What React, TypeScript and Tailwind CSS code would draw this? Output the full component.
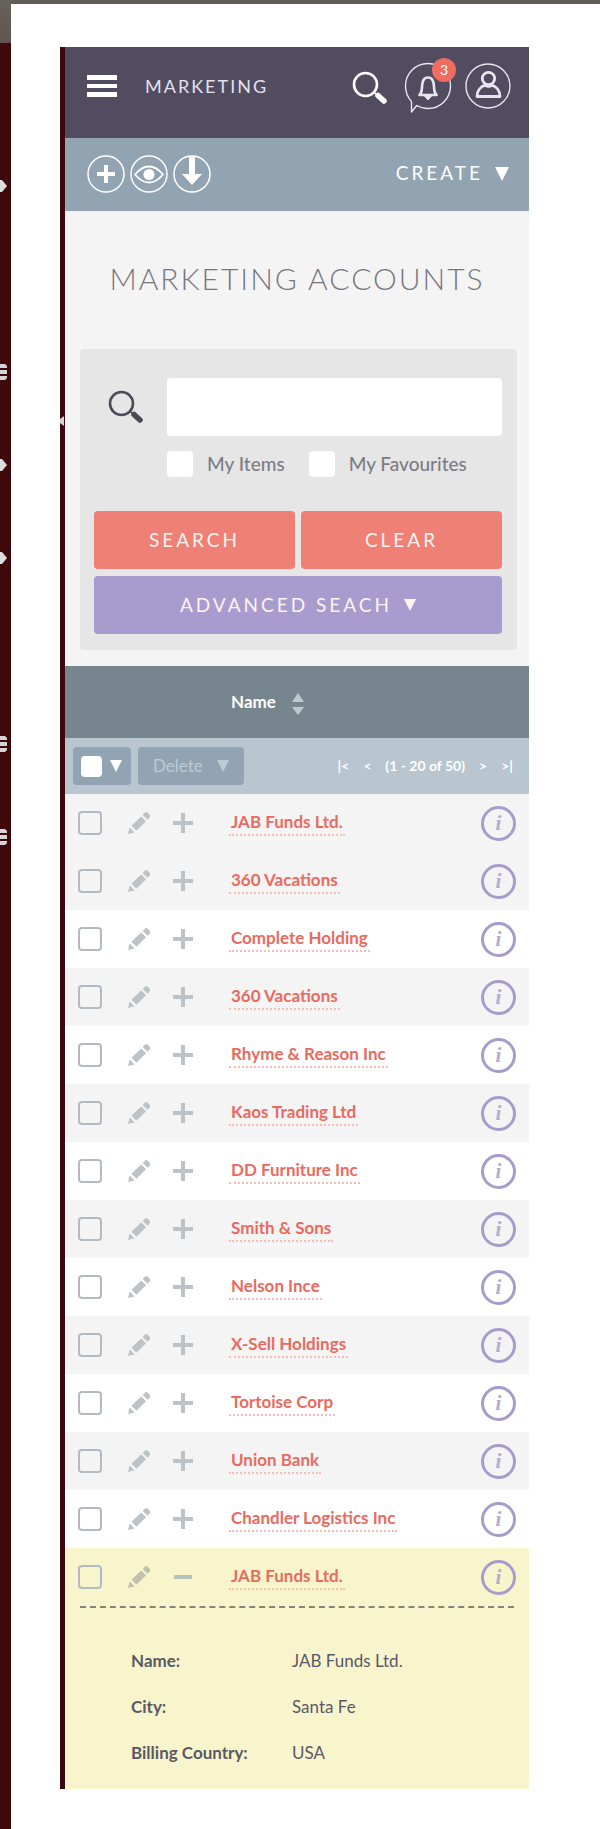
import React, { useState } from 'react';

interface Account {
    id: number;
    name: string;
    city?: string;
    country?: string;
}

const accounts: Account[] = [
    { id: 1, name: 'JAB Funds Ltd.' },
    { id: 2, name: '360 Vacations' },
    { id: 3, name: 'Complete Holding' },
    { id: 4, name: '360 Vacations' },
    { id: 5, name: 'Rhyme & Reason Inc' },
    { id: 6, name: 'Kaos Trading Ltd' },
    { id: 7, name: 'DD Furniture Inc' },
    { id: 8, name: 'Smith & Sons' },
    { id: 9, name: 'Nelson Ince' },
    { id: 10, name: 'X-Sell Holdings' },
    { id: 11, name: 'Tortoise Corp' },
    { id: 12, name: 'Union Bank' },
    { id: 13, name: 'Chandler Logistics Inc' },
    { id: 14, name: 'JAB Funds Ltd.', city: 'Santa Fe', country: 'USA' },
];

const railItems = ['arrow', 'none', 'list', 'arrow', 'arrow', 'none', 'list', 'list'];

const Caret = ({ className }: { className: string }) => (
    <svg viewBox="0 0 14 14" className={className} fill="currentColor" aria-hidden="true">
        <path d="M0 0h14L7 14z" />
    </svg>
);

const SearchIcon = ({ className }: { className: string }) => (
    <svg viewBox="0 0 36 34" className={className} fill="none" stroke="currentColor" aria-hidden="true">
        <circle cx="13.5" cy="13.5" r="11.5" strokeWidth="2.600" />
        <path d="M26 24.500l6 5.500" strokeWidth="5.500" strokeLinecap="round" />
        <path d="M21.500 21l3 2.500" strokeWidth="1.600" />
    </svg>
);

const PencilIcon = () => (
    <svg viewBox="0 0 24 24" className="size-6" fill="currentColor" aria-hidden="true">
        <path d="M1 23l1.600-6.600 5 5z" />
        <path d="M4.500 14.800L14.200 5.400l4.800 4.800-9.600 9.500z" />
        <path d="M15.700 3.900l2.100-2.100a2 2 0 0 1 2.800 0l2 2a2 2 0 0 1 0 2.800l-2.100 2.100z" />
    </svg>
);

// Slice of the desktop side menu that peeks out on the left
const SideRail = () => (
    <div className="w-[11px] shrink-0 overflow-hidden bg-[#3f080b]">
        <div className="mb-24 h-[43px] bg-linear-to-b from-[#65625c] to-[#625350]" />
        {railItems.map((item, index) => (
            <div key={index} className="flex h-[93px] items-center">
                {item === 'arrow' && (
                    <svg viewBox="0 0 8 12" className="h-3 w-2" fill="#dedede">
                        <path d="M0 0h2l5 6-5 6H0z" />
                    </svg>
                )}
                {item === 'list' && (
                    <svg viewBox="0 0 8 16" className="h-4 w-2" fill="#d5d5d5">
                        <path d="M0 0h5l2 2v2H0zM0 6h7v4H0zM0 12h7v2l-2 2H0z" />
                    </svg>
                )}
            </div>
        ))}
    </div>
);

const Header = () => (
    <header className="flex h-[91px] items-center bg-[#524c61] pr-[18px] pb-[13px] pl-[22px] text-white">
        <button aria-label="Menu">
            <svg viewBox="0 0 30 24" className="h-6 w-[30px]" fill="currentColor">
                <path d="M0 1h30v5H0zM0 10h30v4H0zM0 18h30v5H0z" />
            </svg>
        </button>
        <span className="ml-7 text-lg tracking-[2px] text-[#e4e0ec]">MARKETING</span>
        <div className="ml-auto flex items-center">
            <button aria-label="Search" className="pt-1">
                <SearchIcon className="h-[34px] w-9" />
            </button>
            <button aria-label="Notifications" className="relative ml-4">
                <svg viewBox="0 0 48 54" className="h-[54px] w-12" fill="none" stroke="#e9e6ef">
                    <path d="M7.500 42.500C3.800 38.500 1.500 33 1.500 27 1.500 14.500 11.600 4.500 24 4.500S46.500 14.500 46.500 27 36.400 49.500 24 49.500c-4.200 0-8-1-11.300-3L7.500 53z" strokeWidth="1.400" strokeLinejoin="round" />
                    <path d="M15.500 36c3-3 2.200-6.500 2.700-10.500.5-4.500 2.800-7 5.800-7s5.300 2.500 5.800 7c.5 4-.3 7.500 2.700 10.500z" strokeWidth="2.600" strokeLinejoin="round" />
                    <path d="M20.500 37h7L24 41z" fill="#e9e6ef" />
                </svg>
                <span className="absolute -top-px right-[-4px] flex size-6 items-center justify-center rounded-full bg-[#ef6c61] text-sm leading-none">3</span>
            </button>
            <button aria-label="Profile" className="ml-[13px]">
                <svg viewBox="0 0 46 46" className="size-[46px]" fill="none" stroke="#e9e6ef">
                    <circle cx="23" cy="23" r="22" strokeWidth="1.400" />
                    <circle cx="23.500" cy="15.500" r="6.200" strokeWidth="2.800" />
                    <path d="M12 33.500c0-6 4-10 8-11.300 2 1.200 5 1.200 7 0 4 1.300 8 5.300 8 11.300z" strokeWidth="2.800" strokeLinejoin="round" />
                </svg>
            </button>
        </div>
    </header>
);

const Toolbar = () => (
    <div className="flex h-[73px] items-center bg-[#92a4b1] pr-5 pb-[2px] pl-[22px] text-white">
        <div className="flex gap-[5px]">
            <button aria-label="Add">
                <svg viewBox="0 0 38 38" className="size-[38px]" fill="none" stroke="currentColor">
                    <circle cx="19" cy="19" r="18" strokeWidth="1.500" />
                    <path d="M19 10v18M10 19h18" strokeWidth="4" />
                </svg>
            </button>
            <button aria-label="View">
                <svg viewBox="0 0 38 38" className="size-[38px]" fill="none" stroke="currentColor">
                    <circle cx="19" cy="19" r="18" strokeWidth="1.500" />
                    <path d="M5 19.500c5-6 9-8 14-8s9 2 14 8c-5 6-9 8-14 8s-9-2-14-8z" strokeWidth="1.800" />
                    <circle cx="19" cy="19.500" r="5.500" fill="currentColor" stroke="none" />
                </svg>
            </button>
            <button aria-label="Download">
                <svg viewBox="0 0 38 38" className="size-[38px]" fill="none" stroke="currentColor">
                    <circle cx="19" cy="19" r="18" strokeWidth="1.500" />
                    <path d="M16 2h6v17h7L19 30 9 19h7z" fill="currentColor" stroke="none" />
                </svg>
            </button>
        </div>
        <button className="ml-auto flex items-center gap-3 text-[19px] tracking-[3px]">
            CREATE
            <Caret className="size-[14px]" />
        </button>
    </div>
);

const SearchPanel = () => (
    <form className="mr-3 ml-[15px] rounded-sm bg-[#e6e6e6] pt-[29px] pr-[15px] pb-4 pl-[14px]" onSubmit={(e) => e.preventDefault()}>
        <div className="flex">
            <label htmlFor="query" className="w-[73px] shrink-0 pt-3 pl-[14px] text-[#4c4a56]">
                <SearchIcon className="h-[34px] w-9" />
            </label>
            <div className="min-w-0 flex-1">
                <input id="query" type="text" aria-label="Search accounts" className="h-[58px] w-full rounded bg-white px-4 text-lg outline-none" />
                <div className="mt-[15px] flex gap-6 text-[19px] leading-[26px] font-medium text-[#7c7d85]">
                    <label className="flex items-center gap-[14px]">
                        <input type="checkbox" className="size-[26px] appearance-none rounded-sm bg-white" />
                        My Items
                    </label>
                    <label className="flex items-center gap-[14px]">
                        <input type="checkbox" className="size-[26px] appearance-none rounded-sm bg-white" />
                        My Favourites
                    </label>
                </div>
            </div>
        </div>
        <div className="mt-[34px] grid grid-cols-2 gap-x-[6px] gap-y-[7px] text-[19px] tracking-[3px] text-[#fdf3f1]">
            <button type="submit" className="h-[58px] rounded bg-[#ee8075]">SEARCH</button>
            <button type="reset" className="h-[58px] rounded bg-[#ee8075]">CLEAR</button>
            <button type="button" className="col-span-2 flex h-[58px] items-center justify-center gap-3 rounded bg-[#a89bce]">
                ADVANCED SEACH
                <Caret className="size-3" />
            </button>
        </div>
    </form>
);

const AccountDetails = ({ account }: { account: Account }) => (
    <tr className="bg-[#f8f5cd]">
        <td colSpan={5} className="px-[15px] pb-3">
            <dl className="grid grid-cols-[161px_1fr] gap-y-[22px] border-t-2 border-dashed border-[#85847a] pt-[41px] pb-3 pl-[51px] text-[17px] leading-6 text-[#5b5866]">
                <dt className="font-bold">Name:</dt>
                <dd>{account.name}</dd>
                <dt className="font-bold">City:</dt>
                <dd>{account.city}</dd>
                <dt className="font-bold">Billing Country:</dt>
                <dd>{account.country}</dd>
            </dl>
        </td>
    </tr>
);

interface AccountRowProps {
    account: Account;
    index: number;
    open: boolean;
    onToggle: () => void;
}

const AccountRow: React.FC<AccountRowProps> = ({ account, index, open, onToggle }) => {
    const striped = index === 0 || index % 2 === 1;

    return (
        <>
            <tr className={`h-[58px] ${open ? 'bg-[#f8f5cd] text-[#c2c1b0]' : striped ? 'bg-[#f4f4f4] text-[#bcc2c5]' : 'bg-white text-[#bcc2c5]'}`}>
                <td className="pl-[13px]">
                    <input
                        type="checkbox"
                        aria-label={`Select ${account.name}`}
                        className="block size-6 appearance-none rounded border-2 border-[#b3bac4] checked:bg-[#b3bac4]"
                    />
                </td>
                <td>
                    <button aria-label={`Edit ${account.name}`} className="block">
                        <PencilIcon />
                    </button>
                </td>
                <td>
                    <button aria-label="Toggle details" aria-expanded={open} onClick={onToggle} className="block">
                        <svg viewBox="0 0 20 20" className="size-5" stroke={open ? '#b5c3b8' : 'currentColor'} strokeWidth="4">
                            <path d={open ? 'M1 10h18' : 'M0 10h20M10 0v20'} />
                        </svg>
                    </button>
                </td>
                <td>
                    <a href="#" className="inline-block border-b-2 border-dotted border-[#f6bdb7] px-[2px] text-[17px] leading-6 font-bold text-[#ea6a60]">
                        {account.name}
                    </a>
                </td>
                <td>
                    <button
                        aria-label={`About ${account.name}`}
                        className="flex size-[35px] items-center justify-center rounded-full border-[3px] border-[#a79dcd] font-['Liberation_Serif',serif] text-[21px] leading-none font-bold text-[#b3acd2] italic"
                    >
                        i
                    </button>
                </td>
            </tr>
            {open && <AccountDetails account={account} />}
        </>
    );
};

const AccountTable = () => {
    const [openId, setOpenId] = useState<number | null>(14);

    return (
        <table className="mt-4 w-full table-fixed border-collapse text-left">
            <colgroup>
                <col className="w-[62px]" />
                <col className="w-[46px]" />
                <col className="w-[56px]" />
                <col />
                <col className="w-12" />
            </colgroup>
            <thead>
                <tr className="h-[72px] bg-[#77858e] text-[17px] text-white">
                    <td colSpan={3} />
                    <th colSpan={2} className="pl-[2px] font-bold">
                        <button className="flex items-center gap-4 font-bold">
                            Name
                            <svg viewBox="0 0 12 22" className="mt-1 h-[22px] w-3" fill="#c0c8ce" aria-hidden="true">
                                <path d="M6 0l6 9H0zM6 22l6-8H0z" />
                            </svg>
                        </button>
                    </th>
                </tr>
                <tr className="h-14 bg-[#b9c6cf] text-white">
                    <td colSpan={5} className="pr-4 pl-2">
                        <div className="flex items-center gap-[7px]">
                            <div className="flex h-[38px] items-center gap-2 rounded bg-[#92a4b3] px-2">
                                <input type="checkbox" aria-label="Select all" className="size-[21px] appearance-none rounded-sm bg-white" />
                                <button aria-label="Selection options" className="pr-px">
                                    <Caret className="size-3" />
                                </button>
                            </div>
                            <button className="flex h-[38px] items-center gap-[14px] rounded bg-[#92a4b3] px-[15px] text-[17px] text-[#bccad5]">
                                Delete
                                <Caret className="size-3" />
                            </button>
                            <div className="ml-auto flex items-center gap-[14px] text-sm font-bold">
                                <button aria-label="First page">|&lt;</button>
                                <button aria-label="Previous page">&lt;</button>
                                <span>(1 - 20 of 50)</span>
                                <button aria-label="Next page">&gt;</button>
                                <button aria-label="Last page">&gt;|</button>
                            </div>
                        </div>
                    </td>
                </tr>
            </thead>
            <tbody>
                {accounts.map((account, index) => (
                    <AccountRow
                        key={account.id}
                        account={account}
                        index={index}
                        open={openId === account.id}
                        onToggle={() => setOpenId(openId === account.id ? null : account.id)}
                    />
                ))}
            </tbody>
        </table>
    );
};

export default function App() {
    return (
        <div className="min-h-screen bg-white font-[Lato,sans-serif]">
            <div className="flex min-h-screen">
                <SideRail />
                <div className="min-w-0 flex-1">
                    <div className="h-1 bg-[#605c57]" />
                    <main className="relative mt-[43px] mr-[71px] mb-10 ml-[49px] border-l-[5px] border-[#3f080f] bg-[#f4f4f4]">
                        <svg viewBox="0 0 4 10" className="absolute top-[369px] -left-[5px] h-[10px] w-1" fill="#d6d2d2" aria-hidden="true">
                            <path d="M4 0v10L0 7V3z" />
                        </svg>
                        <Header />
                        <Toolbar />
                        <h1 className="pt-[49px] pb-[53px] text-center text-3xl leading-9 font-light tracking-[2px] text-[#77777d]">
                            MARKETING ACCOUNTS
                        </h1>
                        <SearchPanel />
                        <AccountTable />
                    </main>
                </div>
            </div>
        </div>
    );
}
